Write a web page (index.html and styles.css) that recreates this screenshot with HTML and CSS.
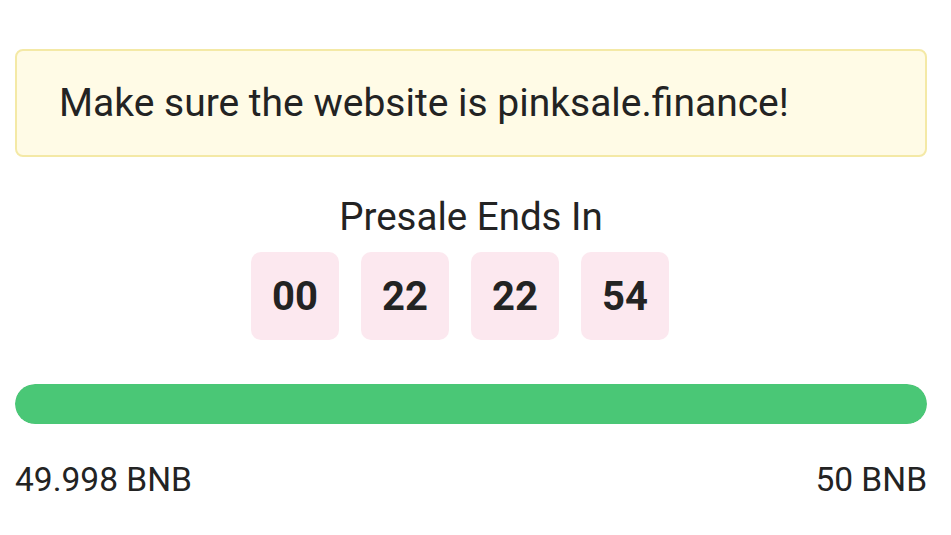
FILE: index.html
```html
<!DOCTYPE html>
<html lang="en">
<head>
  <meta charset="UTF-8">
  <title>Presale</title>
  <link rel="stylesheet" href="styles.css">
</head>
<body>
  <div class="card">
    <div class="alert">Make sure the website is pinksale.finance!</div>

    <div class="countdown">
      <div class="countdown-title">Presale Ends In</div>
      <div class="countdown-boxes">
        <div class="time-box">00</div>
        <div class="time-box">22</div>
        <div class="time-box">22</div>
        <div class="time-box">54</div>
      </div>
    </div>

    <div class="progress">
      <div class="progress-bar" style="width: 99.996%"></div>
    </div>

    <div class="progress-labels">
      <span>49.998 BNB</span>
      <span>50 BNB</span>
    </div>
  </div>
</body>
</html>
```

FILE: styles.css
```css
body {
  margin: 0;
  background: #fff;
  font-family: Roboto, 'Noto Sans', sans-serif;
  color: #232323;
}
.card {
  padding: 49px 24px 0 15px;
}
.alert {
  background-color: #fffbe6;
  border: 2px solid #f4e9a6;
  border-radius: 8px;
  padding: 28px 42px;
  font-size: 39px;
  line-height: 48px;
}
.countdown {
  margin-top: 36px;
  text-align: center;
}
.countdown-title {
  font-size: 38.5px;
  line-height: 48px;
}
.countdown-boxes {
  display: flex;
  justify-content: center;
  margin-top: 11px;
}
.time-box {
  width: 88px;
  height: 88px;
  margin-right: 22px;
  border-radius: 10px;
  background-color: #fce8ef;
  display: flex;
  align-items: center;
  justify-content: center;
  font-size: 40px;
  font-weight: 700;
}
.progress {
  margin-top: 44px;
  height: 40px;
  border-radius: 20px;
  background-color: #e9e9e9;
  overflow: hidden;
}
.progress-bar {
  height: 100%;
  background-color: #4ac776;
  border-radius: 20px;
}
.progress-labels {
  display: flex;
  justify-content: space-between;
  margin-top: 36px;
  font-size: 33.5px;
  line-height: 40px;
}
```
